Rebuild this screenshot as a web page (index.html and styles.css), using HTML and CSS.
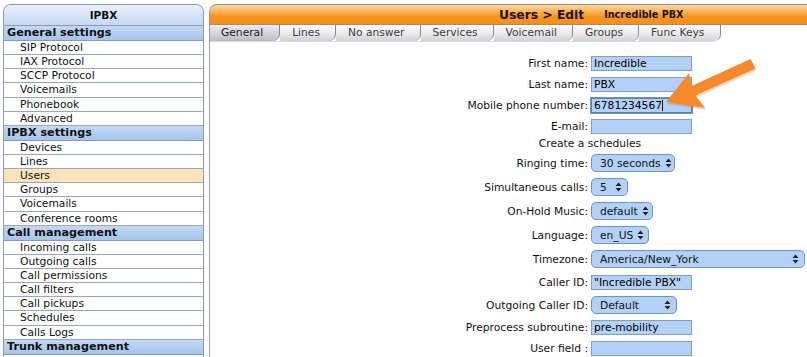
FILE: index.html
```html
<!DOCTYPE html>
<html>
<head>
<meta charset="utf-8">
<link rel="stylesheet" href="styles.css">
</head>
<body>
<div class="page">
  <nav class="sidebar">
    <div class="side-head">IPBX</div>
    <div class="cat">General settings</div>
    <div class="item">SIP Protocol</div>
    <div class="item">IAX Protocol</div>
    <div class="item">SCCP Protocol</div>
    <div class="item">Voicemails</div>
    <div class="item">Phonebook</div>
    <div class="item">Advanced</div>
    <div class="cat">IPBX settings</div>
    <div class="item">Devices</div>
    <div class="item">Lines</div>
    <div class="item active">Users</div>
    <div class="item">Groups</div>
    <div class="item">Voicemails</div>
    <div class="item">Conference rooms</div>
    <div class="cat">Call management</div>
    <div class="item">Incoming calls</div>
    <div class="item">Outgoing calls</div>
    <div class="item">Call permissions</div>
    <div class="item">Call filters</div>
    <div class="item">Call pickups</div>
    <div class="item">Schedules</div>
    <div class="item">Calls Logs</div>
    <div class="cat">Trunk management</div>
    <div class="item">&nbsp;</div>
  </nav>

  <main class="panel">
    <div class="panel-head">
      <span class="title">Users &gt; Edit</span>
      <span class="subtitle">Incredible PBX</span>
    </div>
    <div class="tabs">
      <div class="tab current">General</div>
      <div class="tab">Lines</div>
      <div class="tab">No answer</div>
      <div class="tab">Services</div>
      <div class="tab">Voicemail</div>
      <div class="tab">Groups</div>
      <div class="tab">Func Keys</div>
    </div>

    <div class="form">
      <div class="field in"><label>First name:</label><div class="input">Incredible</div></div>
      <div class="field in"><label>Last name:</label><div class="input">PBX</div></div>
      <div class="field in"><label>Mobile phone number:</label><div class="input focus">6781234567<span class="caret"></span></div></div>
      <div class="field in short"><label>E-mail:</label><div class="input"></div></div>
      <div class="note">Create a schedules</div>
      <div class="field sel"><label>Ringing time:</label><div class="select w-ring"><span>30 seconds</span><svg class="updown" width="7" height="10" viewBox="0 0 7 10"><path d="M0.5 4 L3.5 0.5 L6.5 4 Z M0.5 6 L3.5 9.5 L6.5 6 Z" fill="#222"/></svg></div></div>
      <div class="field sel"><label>Simultaneous calls:</label><div class="select w-sim"><span>5</span><svg class="updown" width="7" height="10" viewBox="0 0 7 10"><path d="M0.5 4 L3.5 0.5 L6.5 4 Z M0.5 6 L3.5 9.5 L6.5 6 Z" fill="#222"/></svg></div></div>
      <div class="field sel"><label>On-Hold Music:</label><div class="select w-moh"><span>default</span><svg class="updown" width="7" height="10" viewBox="0 0 7 10"><path d="M0.5 4 L3.5 0.5 L6.5 4 Z M0.5 6 L3.5 9.5 L6.5 6 Z" fill="#222"/></svg></div></div>
      <div class="field sel"><label>Language:</label><div class="select w-lang"><span>en_US</span><svg class="updown" width="7" height="10" viewBox="0 0 7 10"><path d="M0.5 4 L3.5 0.5 L6.5 4 Z M0.5 6 L3.5 9.5 L6.5 6 Z" fill="#222"/></svg></div></div>
      <div class="field sel"><label>Timezone:</label><div class="select w-tz"><span>America/New_York</span><svg class="updown" width="7" height="10" viewBox="0 0 7 10"><path d="M0.5 4 L3.5 0.5 L6.5 4 Z M0.5 6 L3.5 9.5 L6.5 6 Z" fill="#222"/></svg></div></div>
      <div class="field in tall"><label>Caller ID:</label><div class="input">"Incredible PBX"</div></div>
      <div class="field sel"><label>Outgoing Caller ID:</label><div class="select w-out"><span>Default</span><svg class="updown" width="7" height="10" viewBox="0 0 7 10"><path d="M0.5 4 L3.5 0.5 L6.5 4 Z M0.5 6 L3.5 9.5 L6.5 6 Z" fill="#222"/></svg></div></div>
      <div class="field in"><label>Preprocess subroutine:</label><div class="input">pre-mobility</div></div>
      <div class="field in"><label>User field :</label><div class="input"></div></div>
    </div>

    <svg class="pointer" width="110" height="60" viewBox="655 55 110 60">
      <polygon points="665,102 688,73 690.5,86 749.5,59 754.5,68.5 694.5,95.5 704,108" fill="#b0602a" opacity="0.25" transform="translate(1,2)"/>
      <polygon points="665,102 688,73 690.5,86 749.5,59 754.5,68.5 694.5,95.5 704,108" fill="#f68a2a"/>
    </svg>
  </main>
</div>
</body>
</html>
```

FILE: styles.css
```css
html, body {
  margin: 0;
  padding: 0;
  background: #ffffff;
  overflow: hidden;
}

body {
  font-family: "DejaVu Sans", Verdana, sans-serif;
  font-size: 10.7px;
  color: #111;
}

.page {
  display: flex;
  align-items: flex-start;
  gap: 5px;
  padding: 4px 0 0 3px;
  width: 1000px;
}

/* ---------- sidebar ---------- */
.sidebar {
  width: 201px;
  flex: none;
  box-sizing: border-box;
  border: 1px solid #8d9aad;
  border-bottom: none;
  border-radius: 8px 8px 0 0;
  overflow: hidden;
}

.side-head {
  height: 20px;
  line-height: 20px;
  text-align: center;
  font-weight: bold;
  font-size: 10.5px;
  background: linear-gradient(#e9f1fb, #c5d9f3);
  border-bottom: 1px solid #8d9aad;
}

.cat {
  height: 14px;
  line-height: 14px;
  padding-left: 3px;
  font-weight: bold;
  font-size: 11.2px;
  background: linear-gradient(#c3d8f4, #a5c5ec);
  border-bottom: 1px solid #8d9aad;
  white-space: nowrap;
}

.item {
  height: 13.15px;
  line-height: 13px;
  padding-left: 16px;
  background: #fff;
  border-bottom: 1px solid #98a7bd;
}

.item.active {
  background: #fde3b9;
}

/* ---------- main panel ---------- */
.panel {
  position: relative;
  width: 760px;
  flex: none;
  border-left: 1px solid #9a9a9a;
  border-top-left-radius: 8px;
  min-height: 400px;
}

.panel-head {
  height: 19px;
  display: flex;
  align-items: center;
  gap: 20px;
  padding-left: 289px;
  border-top: 1px solid #a08d78;
  border-bottom: 1px solid #a08d78;
  border-top-left-radius: 7px;
  background: linear-gradient(#fdd9a4 0%, #fbb45a 35%, #f7951f 60%, #f68f16 100%);
}

.title {
  font-weight: bold;
  font-size: 12.3px;
  color: #1a1208;
}

.subtitle {
  font-weight: bold;
  font-size: 9.6px;
  color: #1a1208;
}

.tabs {
  display: flex;
  width: 510px;
  height: 16px;
  border-bottom-right-radius: 8px;
  overflow: hidden;
  border-right: 1px solid #8a8a8a;
  border-bottom: 1px solid #d8d8d8;
}

.tab {
  height: 16px;
  line-height: 16px;
  padding: 0 15px 0 12px;
  color: #3c3c3c;
  background: linear-gradient(#ffffff, #e9e9ec 55%, #d2d2d6);
  border-right: 1px solid #8a8a8a;
  border-bottom-right-radius: 7px;
  white-space: nowrap;
}

.tab:last-child {
  border-right: none;
  flex: 1;
}

.tab.current {
  color: #1a1a1a;
  padding-left: 11px;
  padding-right: 16px;
  background: linear-gradient(#ececf1, #cfcfd8 60%, #bcbcc8);
}

/* ---------- form ---------- */
.form {
  padding-top: 11px;
}

.field {
  display: flex;
  align-items: center;
  gap: 3px;
}

.field.in { height: 21px; }
.field.in.short { height: 20px; }
.field.in.tall { height: 22px; }
.field.sel { height: 24px; }

.field label {
  width: 378px;
  flex: none;
  text-align: right;
  color: #111;
}

.note {
  height: 15px;
  line-height: 15px;
  text-align: center;
}

.input {
  box-sizing: border-box;
  width: 101px;
  height: 15px;
  line-height: 13px;
  padding-left: 2px;
  background: #b3d1f6;
  border: 1px solid #7f9fca;
  color: #000;
  white-space: nowrap;
}

.input.focus {
  box-shadow: 0 0 0 1px #6d93c9;
  border-color: #5b7fb4;
}

.caret {
  display: inline-block;
  width: 1px;
  height: 11px;
  background: #000;
  vertical-align: -2px;
}

.select {
  box-sizing: border-box;
  height: 18px;
  display: flex;
  align-items: center;
  justify-content: space-between;
  gap: 4px;
  padding: 0 5px 0 8px;
  background: #b3d1f6;
  border: 1px solid #6e93c7;
  border-radius: 5px;
  color: #111;
  white-space: nowrap;
}

.w-ring { width: 84px; }
.w-sim { width: 37px; }
.w-moh { width: 62px; }
.w-lang { width: 58px; }
.w-tz { width: 214px; }
.w-out { width: 86px; }

.updown { flex: none; }

.pointer {
  position: absolute;
  left: 446px;
  top: 51px;
}
```
